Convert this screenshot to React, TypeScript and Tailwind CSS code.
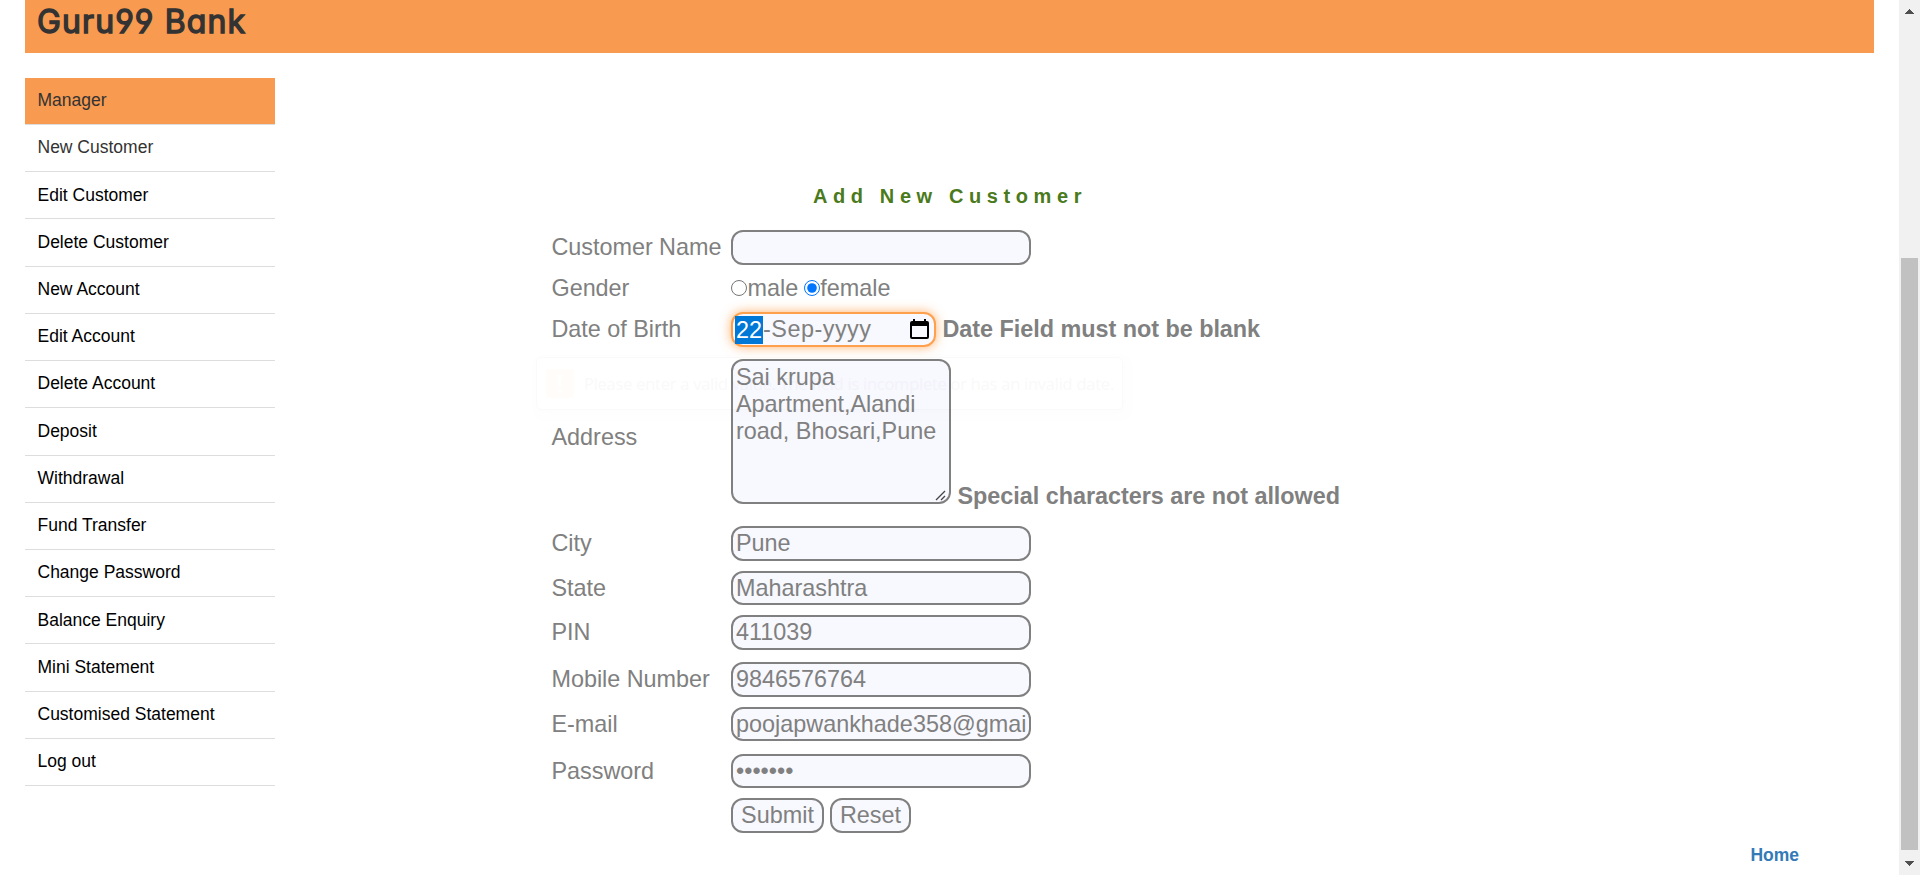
import type { ReactNode } from 'react';

const menuItems = [
  'Edit Customer',
  'Delete Customer',
  'New Account',
  'Edit Account',
  'Delete Account',
  'Deposit',
  'Withdrawal',
  'Fund Transfer',
  'Change Password',
  'Balance Enquiry',
  'Mini Statement',
  'Customised Statement',
  'Log out',
];

const fieldClass =
  'block w-[300px] rounded-[12px] border-2 border-[#808080] bg-[#f8f8ff] px-[3px] py-0 text-[#808080] outline-none';

function Row({ label, className, children }: { label?: string; className: string; children: ReactNode }) {
  return (
    <div className={`flex items-center ${className}`}>
      <div className="w-[180px] shrink-0 pl-[0.5px] tracking-[-0.03px]">{label}</div>
      {children}
    </div>
  );
}

function Sidebar() {
  return (
    <ul className="mt-[24.8px] ml-[25px] w-[250px] shrink-0 text-[17.5px] leading-[25px] text-black">
      <li className="h-[47.22px] border-b border-[#dddddd] bg-[#f89a50] px-[12.5px] pt-[10.3px] text-[#333333]">Manager</li>
      <li className="h-[47.22px] border-b border-[#dddddd] px-[12.5px] pt-[10.3px] text-[#333333]">New Customer</li>
      {menuItems.map((item) => (
        <li key={item} className="h-[47.22px] border-b border-[#dddddd] px-[12.5px] pt-[10.3px]">
          {item}
        </li>
      ))}
    </ul>
  );
}

function CalendarIcon() {
  return (
    <svg className="h-[21px] w-[19px]" viewBox="0 0 19 21" fill="#000">
      <path d="M2 2h1V0h2v2h9V0h2v2h1a2 2 0 0 1 2 2v14a2 2 0 0 1-2 2H2a2 2 0 0 1-2-2V4a2 2 0 0 1 2-2zm0 5v11h15V7z" />
    </svg>
  );
}

function ValidationBubble() {
  return (
    <div className="pointer-events-none absolute top-[127px] left-[-15px] flex h-[53px] w-[587px] items-center rounded-[5px] border border-black/80 px-[9px] opacity-[0.02] shadow-[3px_4px_6px_rgba(0,0,0,0.3)]">
      <div className="flex h-[29px] w-[28px] shrink-0 items-center justify-center rounded-[3px] bg-[#ff8c00] text-[24px] font-bold text-white">!</div>
      <div className="ml-[10px] font-['Open_Sans',sans-serif] text-[16.5px] tracking-[-0.25px] whitespace-nowrap text-black">
        Please enter a valid value. The field is incomplete or has an invalid date.
      </div>
    </div>
  );
}

function CustomerForm() {
  return (
    <form className="relative mt-[26px] text-[23.4px] leading-[27px] text-[#808080]">
      <Row label="Customer Name" className="h-[35px]">
        <input className={`${fieldClass} h-[35px]`} />
      </Row>
      <Row label="Gender" className="h-[47px]">
        <input type="radio" name="gender" className="mt-0 mr-0 mb-[2px] ml-0 h-4 w-4" />
        <span className="ml-[0.5px]">male</span>
        <input type="radio" name="gender" defaultChecked className="mt-0 mr-0 mb-[2px] ml-[6px] h-4 w-4" />
        <span>female</span>
      </Row>
      <Row label="Date of Birth" className="h-[35px]">
        <div className="flex h-[35px] w-[205px] items-center rounded-[12px] border-2 border-[#ffa04d] bg-[#f8f8ff] pr-[5px] pl-[2px] shadow-[0_0_11px_rgba(255,150,60,0.75)]">
          <span className="h-[28px] bg-[#0078d7] px-px leading-[28px] text-white">22</span>
          <span className="flex-1 tracking-[0.5px]">-Sep-yyyy</span>
          <CalendarIcon />
        </div>
        <span className="ml-[6.5px] font-bold tracking-[-0.03px]">Date Field must not be blank</span>
      </Row>
      <div className="mt-[12px] flex h-[145px]">
        <div className="w-[180px] shrink-0 pt-[65px] pl-[0.5px]">Address</div>
        <div className="relative">
          <textarea
            className="block h-[145px] w-[220px] resize-none overflow-hidden rounded-[12px] border-2 border-[#808080] bg-[#f8f8ff] px-[3px] py-[3px] leading-[27px] text-[#808080] outline-none"
            defaultValue="Sai krupa Apartment,Alandi road, Bhosari,Pune"
          />
          <svg className="absolute right-[4px] bottom-[3px] h-[12px] w-[12px]" viewBox="0 0 12 12" stroke="#444" strokeWidth="1.3">
            <path d="M1 11L10 2M6 11L10 7" />
          </svg>
        </div>
        <span className="mt-[123.5px] ml-[6.5px] font-bold tracking-[-0.03px]">Special characters are not allowed</span>
      </div>
      <Row label="City" className="mt-[22px] h-[35px]">
        <input className={`${fieldClass} h-[35px]`} defaultValue="Pune" />
      </Row>
      <Row label="State" className="mt-[10px] h-[34px]">
        <input className={`${fieldClass} h-[34px]`} defaultValue="Maharashtra" />
      </Row>
      <Row label="PIN" className="mt-[10px] h-[35px]">
        <input className={`${fieldClass} h-[35px]`} defaultValue="411039" />
      </Row>
      <Row label="Mobile Number" className="mt-[12px] h-[35px]">
        <input className={`${fieldClass} h-[35px]`} defaultValue="9846576764" />
      </Row>
      <Row label="E-mail" className="mt-[10px] h-[34px]">
        <input className={`${fieldClass} h-[34px]`} defaultValue="poojapwankhade358@gmail.com" />
      </Row>
      <Row label="Password" className="mt-[13px] h-[34px]">
        <input type="password" className={`${fieldClass} h-[34px]`} defaultValue="abcdefg" />
      </Row>
      <Row className="mt-[10px] h-[35px]">
        <button type="button" className="h-[35px] w-[93px] rounded-[12px] border-2 border-[#808080] bg-[#f8f8ff]">
          Submit
        </button>
        <button type="button" className="ml-[6px] h-[35px] w-[81px] rounded-[12px] border-2 border-[#808080] bg-[#f8f8ff]">
          Reset
        </button>
      </Row>
      <ValidationBubble />
    </form>
  );
}

function Scrollbar() {
  return (
    <div className="flex w-[21px] shrink-0 flex-col items-center bg-[#f1f1f1]">
      <svg className="mt-[9px] mr-px h-[5px] w-[9px]" viewBox="0 0 9 5" fill="#505050">
        <path d="M4 0h1v1h1v1h1v1h1v1h1v1H0V4h1V3h1V2h1V1h1z" />
      </svg>
      <div className="mt-[244px] mr-px h-[592px] w-[17px] bg-[#c1c1c1]" />
      <svg className="mt-[11px] mr-px h-[5px] w-[9px]" viewBox="0 0 9 5" fill="#505050">
        <path d="M0 0h9v1H8v1H7v1H6v1H5v1H4V4H3V3H2V2H1V1H0z" />
      </svg>
    </div>
  );
}

export default function App() {
  return (
    <div className="flex h-[875px] w-[1920px] overflow-hidden bg-white font-['Liberation_Sans',Arial,sans-serif]">
      <div className="flex min-w-0 flex-1 flex-col">
        <header className="mr-[25px] ml-[25px] h-[53px] shrink-0 bg-[#f89a50] pl-[12px]">
          <h1 className="font-['Inter',sans-serif] text-[32px] leading-[44px] font-normal tracking-[1.1px] text-[#333333] [-webkit-text-stroke:1.4px_#333333] [font-feature-settings:'cv11','cv04']">
            Guru99 Bank
          </h1>
        </header>
        <div className="flex min-h-0 flex-1">
          <Sidebar />
          <main className="ml-[276px] flex flex-1 flex-col pt-[131px]">
            <h2 className="ml-[262px] h-[20px] text-[20px] leading-[24px] font-bold tracking-[5.6px] text-[#4a7a1c]">Add New Customer</h2>
            <CustomerForm />
            <a className="mt-[10px] mr-[100px] self-end text-[17.5px] leading-[25px] font-bold text-[#337ab7]">Home</a>
          </main>
        </div>
      </div>
      <Scrollbar />
    </div>
  );
}
